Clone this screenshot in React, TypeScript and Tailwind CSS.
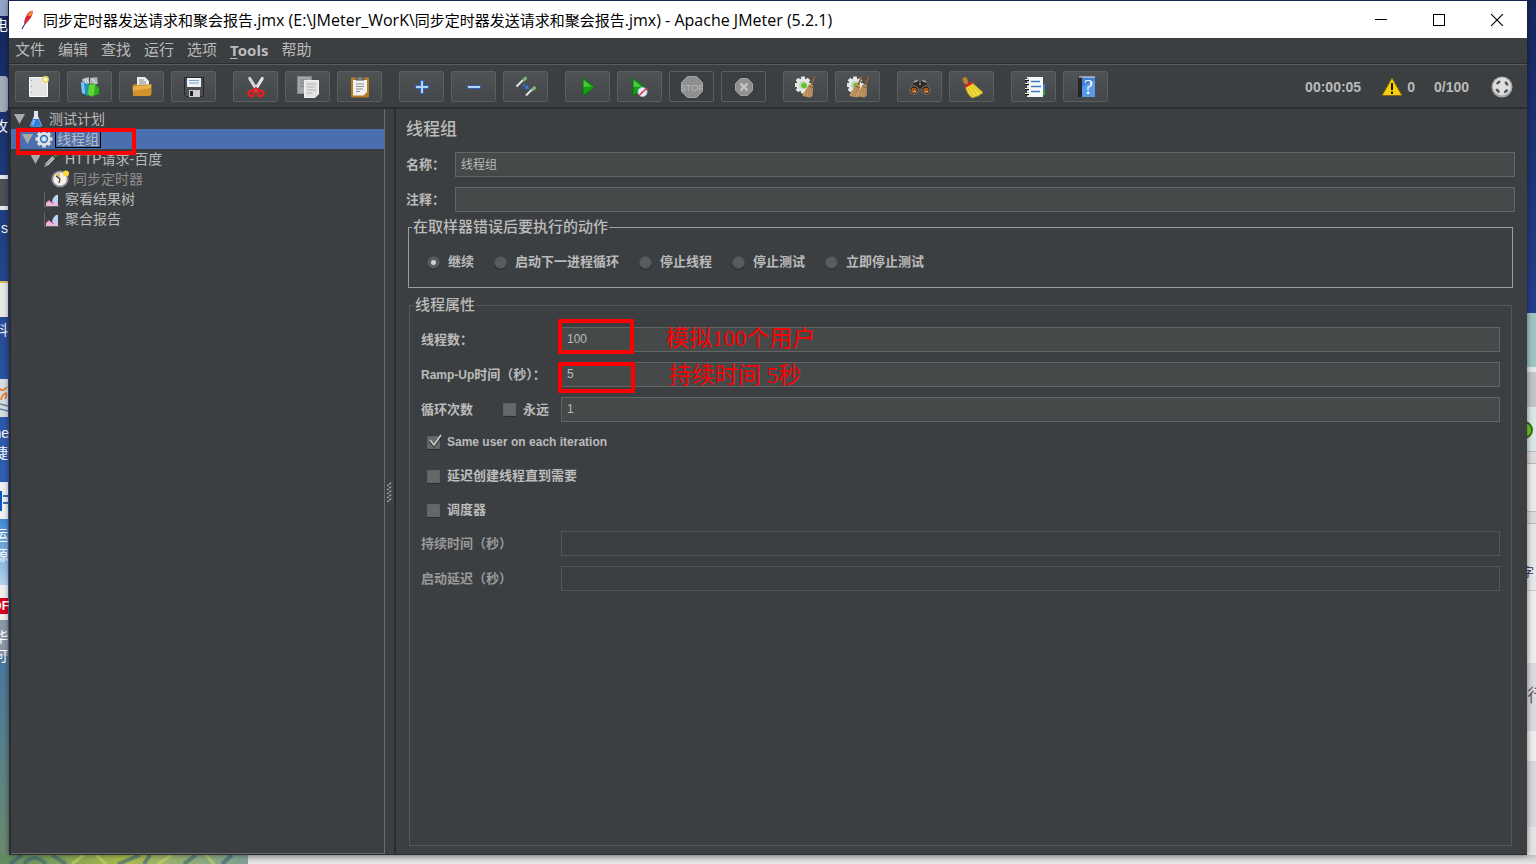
import { ReactNode, useState } from "react";

type IconName =
  | "new"
  | "templates"
  | "open"
  | "save"
  | "cut"
  | "copy"
  | "paste"
  | "expand"
  | "collapse"
  | "toggle"
  | "start"
  | "startNoPauses"
  | "stop"
  | "shutdown"
  | "clear"
  | "clearAll"
  | "search"
  | "searchReset"
  | "functions"
  | "help";

const gearTeeth = [0, 45, 90, 135, 180, 225, 270, 315];

const Gear = () => (
  <g>
    {gearTeeth.map((angle) => (
      <rect
        key={angle}
        x="6"
        y="0.5"
        width="4"
        height="4"
        rx="0.8"
        fill="#e6e8e6"
        transform={`rotate(${angle} 8 9)`}
      />
    ))}
    <circle cx="8" cy="9" r="6.6" fill="#e6e8e6" />
    <circle cx="8" cy="9" r="4" fill="#c9d6c2" />
    <circle cx="9" cy="9.5" r="2.8" fill="#5fc42c" />
  </g>
);

const Broom = () => (
  <g>
    <path d="M19.5 0.5L16 10" stroke="#8a6038" strokeWidth="2" />
    <path d="M14 8L18 9.5L17.5 20L15 21.5L7.5 20L8 18Z" fill="#c49a66" />
    <path
      d="M14.5 10L10 20M15.5 10.5L13 21M17 11L15.5 21"
      stroke="#9c7446"
      strokeWidth="0.7"
    />
    <path d="M13.5 10L18 11.5" stroke="#7c5630" strokeWidth="0.9" />
  </g>
);

const toolbarIcons: Record<IconName, ReactNode> = {
  new: (
    <>
      <path d="M2.5 1.5H20.5V20.5H2.5Z" fill="#e4e4e4" stroke="#fafafa" />
      <path d="M4.5 4v1M4.5 10v1M4.5 16v1" stroke="#9a9a9a" />
      <circle cx="18.5" cy="3.5" r="3.4" fill="#e8dc72" />
      <circle cx="18.5" cy="3.5" r="1.6" fill="#fffde0" />
    </>
  ),
  templates: (
    <>
      <path d="M3 3L10 1V8L4 9ZM11 2L18 1L19 8L11 9Z" fill="#a9b4b8" />
      <path d="M5 3L8 8M7 2L10 7M13 2L16 7" stroke="#e8eef0" />
      <path d="M2 6L9 8V20L3 17Z" fill="#1f8fd8" />
      <path d="M2 6L5 7L6 18L3 17Z" fill="#7cc8f4" />
      <path d="M9 9L14 7L20 12V18L12 21L8 18Z" fill="#2fae1d" />
      <path d="M10 9L16 8L15 19L11 20L9 18Z" fill="#62d43c" />
    </>
  ),
  open: (
    <>
      <path d="M2 8H7V19H2Z" fill="#b97c14" />
      <path d="M6 1H14L18 5V14H6Z" fill="#ececec" />
      <path d="M8 4H13M8 6H15M8 8H15" stroke="#8d8d8d" />
      <path d="M1.5 10L7 9H13L20.5 8V18L19 20H2Z" fill="#d2922a" />
      <path d="M2 10.5L8 10L20 9V12L2 15Z" fill="#e8b048" />
    </>
  ),
  save: (
    <>
      <path d="M1.5 1.5H20.5V20.5H3L1.5 19Z" fill="#4c4d50" stroke="#26272a" />
      <rect x="4" y="2" width="14" height="9" fill="#eef3f8" />
      <path d="M6 4.5H16M6 7H16" stroke="#7ba3cc" />
      <rect x="6" y="14" width="11" height="7" fill="#cfcfcf" />
      <rect x="7" y="15" width="3" height="5" fill="#222" />
    </>
  ),
  cut: (
    <>
      <path d="M3.5 1L5.5 1L13.5 13.5L11 15.5L3.5 3.5Z" fill="#d6d8d8" />
      <path d="M18.5 1L16.5 1L8.5 13.5L11 15.5L18.5 3.5Z" fill="#e4e6e6" />
      <ellipse cx="6.3" cy="17.5" rx="3" ry="2.7" stroke="#e02020" strokeWidth="2.4" />
      <ellipse cx="15.7" cy="17.5" rx="3" ry="2.7" stroke="#e02020" strokeWidth="2.4" />
      <path d="M7.5 15.5L11 12.5L14.5 15.5" stroke="#e02020" strokeWidth="2.6" />
    </>
  ),
  copy: (
    <>
      <path d="M0.5 0.5H14.5V17.5H0.5Z" fill="#a2a4a5" stroke="#858788" />
      <path d="M3 4H10M3 7H8M3 10H8" stroke="#7d7f80" />
      <path d="M7.5 4.5H21.5V18L18 21.5H7.5Z" fill="#e2e2e2" stroke="#f4f4f4" />
      <path d="M10 8H19M10 11H18M10 14H19M10 17H15" stroke="#b5b5b5" />
    </>
  ),
  paste: (
    <>
      <rect x="2" y="1.5" width="18" height="20" rx="1" fill="#b87a22" />
      <path d="M4 4H18V16L14.5 19.5H4Z" fill="#f1f1f1" />
      <path d="M7 8H15M7 10.5H15M7 13H14M7 15.5H11" stroke="#8d8d8d" />
      <path d="M7 4V2H9Q11 -1 13 2H15V4Z" fill="#8e9492" stroke="#4f5452" />
    </>
  ),
  expand: (
    <>
      <path d="M11 4V18M4 11H18" stroke="#2c66b8" strokeWidth="3.8" />
      <path d="M11 5V17M5 11H17" stroke="#b5d3f5" strokeWidth="2" />
    </>
  ),
  collapse: (
    <>
      <path d="M4 11H18" stroke="#2c66b8" strokeWidth="3.8" />
      <path d="M5 11H17" stroke="#b5d3f5" strokeWidth="2" />
    </>
  ),
  toggle: (
    <>
      <path d="M1.5 10.5L8 4" stroke="#dfe3e0" strokeWidth="2" />
      <path d="M8 4.5L11.5 1.5" stroke="#7db86a" strokeWidth="3" />
      <path d="M11 19.5L17 13.5" stroke="#dfe3e0" strokeWidth="2" />
      <path d="M17 14L20.5 11" stroke="#7db86a" strokeWidth="3" />
      <path d="M8 8L12 11.5" stroke="#2f7ae0" strokeWidth="1.4" />
      <path d="M14 13.5L9.8 12.5L13 9Z" fill="#2f7ae0" />
    </>
  ),
  start: (
    <>
      <path d="M6 2L17.5 11L6 20Z" fill="#12a012" stroke="#0d700d" />
      <path d="M6.6 4L14.5 10.5L6.6 11Z" fill="#4cc83e" />
    </>
  ),
  startNoPauses: (
    <>
      <path d="M4 2L15.5 11L4 20Z" fill="#12a012" stroke="#0d700d" />
      <path d="M4.6 4L12.5 10.5L4.6 11Z" fill="#4cc83e" />
      <circle cx="13.5" cy="16" r="4.6" fill="#e8eef8" stroke="#9fb7dd" />
      <path d="M10 19.5L18 12" stroke="#d6343c" strokeWidth="1.6" />
    </>
  ),
  stop: (
    <>
      <path
        d="M6.5 0.5H15.5L21.5 6.5V15.5L15.5 21.5H6.5L0.5 15.5V6.5Z"
        fill="#8f8f8f"
        stroke="#a2a2a2"
      />
      <text
        x="11"
        y="14.5"
        textAnchor="middle"
        fontSize="9"
        fontFamily="Liberation Sans Narrow, Liberation Sans, sans-serif"
        fill="#b8b8b8"
      >
        STOP
      </text>
    </>
  ),
  shutdown: (
    <>
      <path
        d="M7.5 2.5H14.5L19.5 7.5V14.5L14.5 19.5H7.5L2.5 14.5V7.5Z"
        fill="#8f8f8f"
        stroke="#a2a2a2"
      />
      <path d="M7.5 7.5L14.5 14.5M14.5 7.5L7.5 14.5" stroke="#c0c0c0" strokeWidth="2.8" />
    </>
  ),
  clear: (
    <>
      <Gear />
      <Broom />
    </>
  ),
  clearAll: (
    <>
      <Gear />
      <g transform="translate(-5 0)">
        <Broom />
      </g>
      <g transform="translate(2 0)">
        <Broom />
      </g>
    </>
  ),
  search: (
    <>
      <path
        d="M4.5 6L8.5 4L11 6.5L13.5 4L17.5 6L21.5 14L16 17L11 12.5L6 17L0.5 14Z"
        fill="#2b2927"
        stroke="#6c6864"
        strokeWidth="0.8"
      />
      <path d="M5 6L8.5 4.5M13.5 4.5L17 6M10 8H12" stroke="#a5a19c" strokeWidth="1.4" />
      <circle cx="5" cy="14" r="4.2" fill="#141210" stroke="#8b847d" />
      <circle cx="17" cy="14" r="4.2" fill="#141210" stroke="#8b847d" />
      <circle cx="5" cy="14.3" r="2.9" fill="#a25a1e" />
      <circle cx="17" cy="14.3" r="2.9" fill="#a25a1e" />
      <path d="M4 15.5H7M16 15.5H19" stroke="#e0a060" />
    </>
  ),
  searchReset: (
    <>
      <path
        d="M1.5 2.5Q2.5 -0.5 5.5 1.5Q7.5 4 7.5 8L5 9Q1 6 1.5 2.5Z"
        fill="#b78a43"
        stroke="#7b5620"
        strokeWidth="0.8"
      />
      <path
        d="M4.5 11.5L11.5 7L22 16.5Q18 20.5 11 22Q6 18 4.5 11.5Z"
        fill="#f0dc3e"
        stroke="#b9970f"
        strokeWidth="0.8"
      />
      <path d="M7 12L12 20.5M9.5 10.5L15.5 19M11.5 9L19 17" stroke="#c9a71b" strokeWidth="0.8" />
      <path d="M4 10.5L11 6.5" stroke="#d02a1c" strokeWidth="3" />
    </>
  ),
  functions: (
    <>
      <path d="M19 8H22V14H19Z" fill="#2b7de0" />
      <path d="M19 14H22V19H19Z" fill="#2ea32e" />
      <rect x="4" y="1" width="16" height="20" fill="#f7f7f7" />
      <path d="M8 5.5H17M8 10.5H18M8 15.5H17" stroke="#3a78c4" strokeWidth="1.4" />
      <path d="M2 4H6M2 8H6M2 13H6M2 18H6" stroke="#101010" strokeWidth="2.6" />
      <path d="M2 3.5H6M2 7.5H6M2 12.5H6M2 17.5H6" stroke="#e5e5e5" strokeWidth="1.2" />
    </>
  ),
  help: (
    <>
      <path d="M3 1H8V21H3Z" fill="#23262b" />
      <path d="M7 1H20V21H7Z" fill="#3f80d2" />
      <path d="M4 1H20" stroke="#dfe6ee" />
      <path d="M7 11L20 4V21H7Z" fill="#5a9ae4" />
      <text
        x="13.5"
        y="17.5"
        textAnchor="middle"
        fontSize="20"
        fontFamily="Liberation Serif, serif"
        fill="#fff"
      >
        ?
      </text>
    </>
  ),
};

interface ToolbarItem {
  icon: IconName;
  title: string;
  disabled?: boolean;
}

const toolbarGroups: ToolbarItem[][] = [
  [
    { icon: "new", title: "新建" },
    { icon: "templates", title: "模板" },
    { icon: "open", title: "打开" },
    { icon: "save", title: "保存" },
  ],
  [
    { icon: "cut", title: "剪切" },
    { icon: "copy", title: "复制" },
    { icon: "paste", title: "粘贴" },
  ],
  [
    { icon: "expand", title: "全部展开" },
    { icon: "collapse", title: "全部收起" },
    { icon: "toggle", title: "切换" },
  ],
  [
    { icon: "start", title: "启动" },
    { icon: "startNoPauses", title: "不停顿开始" },
    { icon: "stop", title: "停止", disabled: true },
    { icon: "shutdown", title: "关闭", disabled: true },
  ],
  [
    { icon: "clear", title: "清除" },
    { icon: "clearAll", title: "清除全部" },
  ],
  [
    { icon: "search", title: "查找" },
    { icon: "searchReset", title: "重置搜索" },
  ],
  [
    { icon: "functions", title: "函数助手" },
    { icon: "help", title: "帮助" },
  ],
];

const Desktop = () => (
  <div
    aria-hidden="true"
    className="absolute inset-0 overflow-hidden bg-[#1b2f66] text-sm leading-4 text-white"
  >
    <div className="absolute inset-y-0 left-0 w-[9px] overflow-hidden bg-linear-to-b from-[#14265a] via-[#3465bd] via-60% to-[#6e8c6c]">
      <div className="absolute top-0 left-0 h-4 w-2 bg-[#93a5c4]" />
      <div className="absolute top-[76px] left-0 h-9 w-2 rounded-r bg-[#a3acba]" />
      <div className="absolute top-[175px] left-0 h-[35px] w-2 border-y-4 border-[#e8e8e8] bg-[#4c5057]" />
      <div className="absolute top-[281px] left-0 h-9 w-2 border-t-2 border-[#dcb860] bg-[#e9ebe6]" />
      <div className="absolute top-[379px] left-0 h-[38px] w-2 bg-[#d9dee2]" />
      <svg className="absolute top-[384px] left-0" width="8" height="30" viewBox="0 0 8 30">
        <path d="M0 5Q3 8 7 3M1 16Q2 10 6 9Q7 12 5 15" stroke="#e07b2c" strokeWidth="1.8" fill="none" />
        <path d="M0 20L8 22M0 25L8 27" stroke="#6886a0" strokeWidth="1.6" />
      </svg>
      <div className="absolute top-[482px] left-0 h-[37px] w-2 bg-[#f1f3f6]" />
      <div className="absolute top-[491px] left-0 h-5 w-[2px] bg-[#0f56bd]" />
      <div className="absolute top-[495px] left-[3px] h-[9px] w-[5px] border-y-2 border-[#2f72c4]" />
      <div className="absolute top-[519px] left-0 h-[66px] w-2 bg-linear-to-b from-[#3f8cd6] to-[#b9d2ee]" />
      <div className="absolute top-[585px] left-0 h-9 w-2 bg-[#f0f0f0]" />
      <div className="absolute top-[598px] left-0 h-4 w-2 bg-[#d5001f]" />
      <div className="absolute top-[620px] left-0 h-9 w-2 bg-[#8c97a8]" />
      <span className="absolute top-[17px] right-px">电</span>
      <span className="absolute top-[118px] right-px">攻</span>
      <span className="absolute top-[220px] right-px whitespace-nowrap">手.s</span>
      <span className="absolute top-[322px] right-px">料</span>
      <span className="absolute top-[425px] right-0">ne</span>
      <span className="absolute top-[445px] right-px">捷</span>
      <span className="absolute top-[527px] right-px">运</span>
      <span className="absolute top-[547px] right-px">源</span>
      <span className="absolute top-[598px] right-0 text-xs font-bold">DF</span>
      <span className="absolute top-[629px] right-px">华</span>
      <span className="absolute top-[648px] right-px">可</span>
    </div>
    <div className="absolute inset-y-0 right-0 w-[9px] overflow-hidden bg-[#e6e6e6]">
      <div className="h-[313px] bg-linear-to-b from-[#16285e] to-[#24418c]" />
      <div className="h-[54px] bg-[#9dc6c3]" />
      <div className="h-[5px] bg-[#e3ebea]" />
      <div className="h-[35px] bg-[#bfc6c5]" />
      <div className="h-[45px] border-b border-[#b8bcbb] bg-[#dde8e6]" />
      <div className="h-[12px] border-b border-[#bcbcbc] bg-[#dcdcdc]" />
      <div className="h-12 border-b border-[#bcbcbc] bg-[#ececec]" />
      <div className="h-[12px] border-b border-[#bcbcbc] bg-[#dcdcdc]" />
      <div className="h-[67px] border-b border-[#c8c8c8] bg-[#e9e9e9]" />
      <div className="h-[72px] bg-[#efefef]" />
      <div className="h-[68px] bg-[#dcdce0]" />
      <div className="h-[30px] bg-[#efefef]" />
      <div className="h-[66px] bg-[#d8d8de]" />
      <div className="absolute top-[421px] right-[3px] size-[18px] rounded-full border-2 border-[#2e6b20] bg-[#6fcd1c]" />
      <span className="absolute top-[565px] left-[-5px] text-xs text-[#22335c]">字</span>
      <span className="absolute top-[686px] left-0 text-lg leading-5 text-[#6b5e62]">行</span>
    </div>
    <div className="absolute inset-x-0 bottom-0 flex h-[9px] bg-linear-to-b from-[#c4c4c4] to-[#e8e8e8]">
      <div className="w-[248px] bg-linear-to-r from-[#5f8a62] via-[#a9ba4a] to-[#7fa096]">
        <svg viewBox="0 0 248 9" className="h-full w-full opacity-60" preserveAspectRatio="none">
          <path
            d="M10 9L22 0M24 9Q34 -3 46 9M52 0L66 9M118 9L140 0M144 9L150 0M184 9L196 0M222 9L232 0"
            stroke="#3c6478"
            strokeWidth="4"
            fill="none"
          />
          <path
            d="M72 9L84 0M96 0L106 9M158 9L172 0M206 0L214 9"
            stroke="#cfd86a"
            strokeWidth="3"
            fill="none"
          />
        </svg>
      </div>
    </div>
  </div>
);

const TitleBar = () => (
  <header className="flex h-[37px] items-center bg-white pr-px pl-[11px] text-black">
    <svg width="15" height="20" viewBox="0 0 15 20">
      <path d="M12.5 0.5Q13.5 4 10 9L5.5 14L4 13Q5 6 9 2Z" fill="#d22a3c" />
      <path d="M12.5 0.5Q13 3 11 6L7.5 6Q9 2 12.5 0.5Z" fill="#f08a2a" />
      <path d="M5.5 13Q4 15 2 19" stroke="#5a2a6c" strokeWidth="1.2" fill="none" />
    </svg>
    <h1 className="ml-2 flex-1 font-['Open_Sans','Noto_Sans_CJK_SC',sans-serif] text-[15px] leading-5">
      同步定时器发送请求和聚会报告
      <span className="text-base leading-5">.jmx (E:\JMeter_WorK\</span>
      同步定时器发送请求和聚会报告
      <span className="text-base leading-5">.jmx) - Apache JMeter (5.2.1)</span>
    </h1>
    <button aria-label="最小化" className="flex h-full w-[58px] items-center justify-center">
      <svg width="12" height="12" shapeRendering="crispEdges">
        <path d="M0 5.5H12" stroke="#000" />
      </svg>
    </button>
    <button aria-label="最大化" className="flex h-full w-[58px] items-center justify-center">
      <svg width="12" height="12" shapeRendering="crispEdges">
        <path d="M0.5 0.5H11.5V11.5H0.5Z" stroke="#000" fill="none" />
      </svg>
    </button>
    <button aria-label="关闭窗口" className="flex h-full w-[58px] items-center justify-center">
      <svg width="12" height="12">
        <path d="M0 0L12 12M12 0L0 12" stroke="#000" strokeWidth="1.2" />
      </svg>
    </button>
  </header>
);

const MenuBar = () => (
  <nav className="flex h-[27px] items-center gap-[13px] border-b border-[#5a5c5e] pb-0.5 pl-1.5 text-[15px] leading-5 shadow-[inset_0_-1px_0_#2b2d2f]">
    {["文件", "编辑", "查找", "运行", "选项"].map((item) => (
      <button key={item}>{item}</button>
    ))}
    <button className="font-['Noto_Sans',sans-serif] font-bold">
      <span className="underline underline-offset-2">T</span>ools
    </button>
    <button>帮助</button>
  </nav>
);

const Toolbar = () => (
  <div className="flex h-11 items-start border-b-2 border-[#2a2c2e] pt-1.5 pr-3.5 pl-1.5">
    <div className="flex gap-[17px]">
      {toolbarGroups.map((group, index) => (
        <div key={index} className="flex gap-[7px]">
          {group.map(({ icon, title, disabled }) => (
            <button
              key={icon}
              title={title}
              aria-label={title}
              disabled={disabled}
              className="flex h-[31px] w-[45px] items-center justify-center rounded-xs border border-[#5c5f61] bg-linear-to-b from-[#4f5355] to-[#43474a] disabled:bg-none"
            >
              <svg width="22" height="22" viewBox="0 0 22 22" fill="none">
                {toolbarIcons[icon]}
              </svg>
            </button>
          ))}
        </div>
      ))}
    </div>
    <div className="ml-auto flex h-[31px] items-center text-sm leading-5 font-bold">
      <span>00:00:05</span>
      <button aria-label="日志错误" className="ml-5 flex items-center gap-1">
        <svg width="22" height="20" viewBox="0 0 22 20">
          <path d="M11 1L21 18.5H1Z" fill="#f5cf0b" stroke="#7d6606" strokeLinejoin="round" />
          <path d="M11 6V13M11 14.5V17" stroke="#1c1800" strokeWidth="2" />
        </svg>
        0
      </button>
      <span className="ml-[19px]">0/100</span>
      <svg className="ml-[22px]" width="22" height="22" viewBox="0 0 22 22">
        <circle cx="11" cy="11" r="10.5" fill="#a8a8a8" />
        <circle cx="11" cy="10.5" r="9" fill="#dedede" />
        <circle
          cx="11"
          cy="11"
          r="5.8"
          fill="none"
          stroke="#505050"
          strokeWidth="2.4"
          strokeDasharray="4.1 5.01"
          strokeDashoffset="-2.5"
        />
      </svg>
    </div>
  </div>
);

const treeIcons: Record<string, ReactNode> = {
  plan: (
    <>
      <path d="M7 1H11V6L15 16Q9 18 3 16L7 6Z" fill="#dfe6ee" />
      <path d="M6.2 9H11.8L14.5 16Q9 18 3.5 16Z" fill="#2c7ee0" />
      <path d="M7.5 10L5.5 15" stroke="#8fc4fa" strokeWidth="1.4" />
    </>
  ),
  threads: (
    <>
      {gearTeeth.map((angle) => (
        <rect
          key={angle}
          x="7.2"
          y="0.5"
          width="3.6"
          height="4"
          fill="#dcdcdc"
          transform={`rotate(${angle} 9 9)`}
        />
      ))}
      <circle cx="9" cy="9" r="6.6" fill="#e4e4e4" />
      <circle cx="9" cy="9" r="4.2" fill="#3a6fb5" />
      <circle cx="9" cy="9" r="2.8" fill="#a9cbea" />
      <path d="M8 7L11 9L8 11Z" fill="#f4f8fc" />
    </>
  ),
  sampler: (
    <>
      <path d="M1 17L3 13L10 5.5L12.5 8L5.5 15Z" fill="#c9cdca" />
      <path d="M2 16L10 8" stroke="#7c807d" />
      <path d="M9 4.5L14 9.5" stroke="#2f3b2e" strokeWidth="2" />
      <path d="M11 6.5L16 2" stroke="#3f7a3a" strokeWidth="3.6" />
    </>
  ),
  timer: (
    <>
      <circle cx="9" cy="9" r="8.6" fill="#8d8798" />
      <circle cx="9" cy="9" r="6.8" fill="#f3f1ea" />
      <path d="M9 9L4.5 5Q7 2.5 9 3Z" fill="#e0c25a" />
      <path d="M5 6L9 9L8 13" stroke="#3a3a3a" strokeWidth="1.2" fill="none" />
      <circle cx="15" cy="3.5" r="3" fill="#f5d93b" />
    </>
  ),
  listener: (
    <>
      <path d="M1.5 2V17M1 16.5H17" stroke="#606266" />
      <path d="M3 16V13L6 10.5L9 13L15 11V16Z" fill="#eeb7dc" />
      <path d="M9 12Q9.5 6 15 4.5V11L11.5 14Z" fill="#b7d6f2" />
      <path d="M3 13L6 10.5L9 13L11 13.5" stroke="#d868b0" fill="none" />
    </>
  ),
};

interface TreeNode {
  label: string;
  level: number;
  icon: string;
  expandable?: boolean;
  dimmed?: boolean;
}

const treeNodes: TreeNode[] = [
  { label: "测试计划", level: 0, icon: "plan", expandable: true },
  { label: "线程组", level: 1, icon: "threads", expandable: true },
  { label: "HTTP请求-百度", level: 2, icon: "sampler", expandable: true },
  { label: "同步定时器", level: 3, icon: "timer", dimmed: true },
  { label: "察看结果树", level: 2, icon: "listener" },
  { label: "聚合报告", level: 2, icon: "listener" },
];

const TestPlanTree = () => {
  const [selected, setSelected] = useState("线程组");

  return (
    <aside className="relative w-[374px] shrink-0 border-r border-b border-[#6a6c6e] bg-[#3c3f41] text-sm leading-4">
      <ul role="tree">
        {treeNodes.map((node) => {
          const isSelected = node.label === selected;
          return (
            <li
              key={node.label}
              role="treeitem"
              aria-selected={isSelected}
              onClick={() => setSelected(node.label)}
              className={`flex h-5 cursor-default items-center ${
                isSelected ? "bg-[#4b6eaf]" : ""
              } ${node.dimmed ? "text-[#8c8c8c]" : ""}`}
              style={{ paddingLeft: 3 + node.level * 8 }}
            >
              <svg width="11" height="10" viewBox="0 0 11 10">
                {node.expandable && <path d="M0 0H11L5.5 10Z" fill="#a9a9a9" />}
              </svg>
              <svg className="ml-0.5" width="18" height="18" viewBox="0 0 18 18">
                {treeIcons[node.icon]}
              </svg>
              <span
                className={`ml-0.5 border px-px ${
                  isSelected ? "border-black" : "border-transparent"
                }`}
              >
                {node.label}
              </span>
            </li>
          );
        })}
      </ul>
      <div className="pointer-events-none absolute top-[19px] left-[5px] h-[27px] w-[120px] border-4 border-[#ff0000]" />
    </aside>
  );
};

const Splitter = () => (
  <div className="flex w-[11px] shrink-0 items-center justify-center border-r-2 border-[#2a2c2e]">
    <svg className="mt-5" width="6" height="20" viewBox="0 0 6 20">
      <path
        d="M0 4L5 0M0 8L5 4M0 12L5 8M0 16L5 12M0 20L5 16"
        stroke="#a8a8a8"
        strokeWidth="1.6"
        strokeDasharray="2 1"
      />
    </svg>
  </div>
);

interface TextFieldProps {
  id: string;
  label?: ReactNode;
  value?: string;
  disabled?: boolean;
}

const TextInput = ({ id, value = "", disabled }: TextFieldProps) => (
  <input
    id={id}
    type="text"
    defaultValue={value}
    disabled={disabled}
    className="h-[25px] w-full min-w-0 flex-1 border border-[#646464] bg-[#45494a] px-[5px] pb-0.5 text-xs font-normal text-[#bbb] disabled:border-[#545657] disabled:bg-transparent"
  />
);

interface PropertyRowProps extends TextFieldProps {
  children?: ReactNode;
  note?: ReactNode;
}

const PropertyRow = ({ id, label, value, disabled, children, note }: PropertyRowProps) => (
  <div className="relative flex items-center">
    <div
      className={`flex w-[140px] shrink-0 items-center ${disabled ? "text-[#999]" : ""}`}
    >
      <label htmlFor={id}>{label}</label>
      {children}
    </div>
    <TextInput id={id} value={value} disabled={disabled} />
    {note}
  </div>
);

interface CheckboxProps {
  children: ReactNode;
  checked?: boolean;
}

const Checkbox = ({ children, checked }: CheckboxProps) => (
  <label className="flex items-center gap-[7px]">
    <span className="relative size-[13px]">
      <input
        type="checkbox"
        defaultChecked={checked}
        className="peer block size-[13px] appearance-none border border-[#5f6162] bg-[#656768] shadow-[0_1px_0_#2b2d2f]"
      />
      <svg
        className="pointer-events-none absolute -top-0.5 left-0.5 hidden peer-checked:block"
        width="13"
        height="14"
        viewBox="0 0 13 14"
        fill="none"
      >
        <path d="M1 7L5 12L12 2" stroke="#2a2a2a" strokeWidth="2.4" />
        <path d="M1 6L5 11L12 1" stroke="#c4c4c4" strokeWidth="1.8" />
      </svg>
    </span>
    {children}
  </label>
);

const errorActions = ["继续", "启动下一进程循环", "停止线程", "停止测试", "立即停止测试"];

const ThreadGroupPanel = () => (
  <main className="flex min-w-0 flex-1 flex-col pt-[9px] pr-3 pb-2 pl-2.5 text-[13px] leading-5 font-bold">
    <h2 className="text-[17px] leading-6 font-medium">线程组</h2>
    <div className="mt-2.5 flex flex-col gap-2.5">
      <div className="flex items-center">
        <label htmlFor="name" className="w-[49px]">
          名称：
        </label>
        <TextInput id="name" value="线程组" />
      </div>
      <div className="flex items-center">
        <label htmlFor="comment" className="w-[49px]">
          注释：
        </label>
        <TextInput id="comment" />
      </div>
    </div>

    <fieldset className="mx-0.5 mt-[5px] border border-[#999b9c]">
      <legend className="ml-[3px] px-px text-[15px] font-medium">在取样器错误后要执行的动作</legend>
      <div className="flex h-[50px] items-center gap-5 pl-[18px]">
        {errorActions.map((action, index) => (
          <label key={action} className="flex items-center gap-2">
            <input
              type="radio"
              name="errorAction"
              defaultChecked={index === 0}
              className="size-[13px] appearance-none rounded-full border border-[#4a4d4f] bg-[#595c5e] shadow-[0_1px_0_#2b2d2f] checked:bg-[radial-gradient(circle,#d0d0d0_0_2px,#595c5e_3px)]"
            />
            {action}
          </label>
        ))}
      </div>
    </fieldset>

    <fieldset className="mx-[3px] mt-[7px] min-w-0 flex-1 border border-[#55585a]">
      <legend className="ml-1 px-px text-[15px] font-medium">线程属性</legend>
      <div className="flex flex-col gap-2.5 px-[11px] pt-3">
        <PropertyRow
          id="threads"
          label="线程数："
          value="100"
          note={
            <>
              <div className="pointer-events-none absolute -top-2 left-[137px] h-[35px] w-[76px] border-4 border-[#ff0000]" />
              <span className="pointer-events-none absolute top-0 left-[245px] font-['Liberation_Serif','Noto_Sans_CJK_SC',serif] text-[23px] leading-6 font-normal text-[#ff0000]">
                模拟100个用户
              </span>
            </>
          }
        />
        <PropertyRow
          id="rampUp"
          label={
            <>
              <span className="text-xs">Ramp-Up</span>时间（秒）：
            </>
          }
          value="5"
          note={
            <>
              <div className="pointer-events-none absolute top-0 left-[137px] h-[31px] w-[77px] border-4 border-[#ff0000]" />
              <span className="pointer-events-none absolute top-0 left-[248px] font-['Liberation_Serif','Noto_Sans_CJK_SC',serif] text-[23px] leading-7 font-normal text-[#ff0000]">
                持续时间 5秒
              </span>
            </>
          }
        />
        <PropertyRow id="loops" label="循环次数" value="1">
          <div className="ml-auto pr-3">
            <Checkbox>永远</Checkbox>
          </div>
        </PropertyRow>
      </div>
      <div className="flex flex-col items-start gap-3.5 pt-2.5 pb-[11px] pl-[17px]">
        <Checkbox checked>
          <span className="text-xs leading-5">Same user on each iteration</span>
        </Checkbox>
        <Checkbox>延迟创建线程直到需要</Checkbox>
        <Checkbox>调度器</Checkbox>
      </div>
      <div className="flex flex-col gap-2.5 px-[11px]">
        <PropertyRow id="duration" label="持续时间（秒）" disabled />
        <PropertyRow id="delay" label="启动延迟（秒）" disabled />
      </div>
    </fieldset>
  </main>
);

const App = () => (
  <div className="relative flex min-h-screen flex-col font-['Liberation_Sans','Noto_Sans_CJK_SC',sans-serif]">
    <Desktop />
    <div className="relative mx-[9px] mt-px mb-[9px] flex flex-1 flex-col bg-[#3c3f41] text-[#bbb] shadow-[0_0_6px_rgba(0,0,0,0.5)]">
      <TitleBar />
      <MenuBar />
      <Toolbar />
      <div className="flex flex-1 border-b border-l-2 border-[#2a2c2e]">
        <TestPlanTree />
        <Splitter />
        <ThreadGroupPanel />
      </div>
    </div>
  </div>
);

export default App;
